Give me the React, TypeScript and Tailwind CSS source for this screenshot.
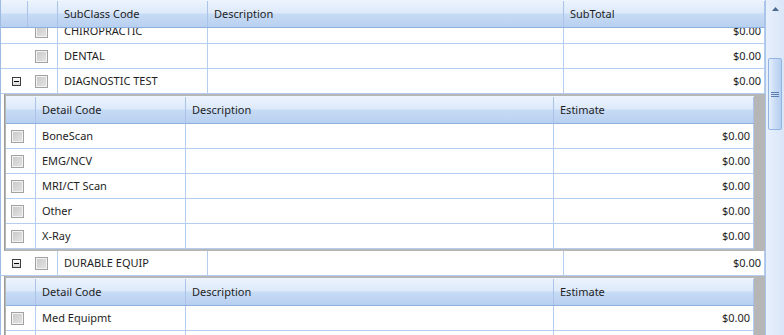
const font = "font-['Noto_Sans',sans-serif] text-[11px] text-[#1e1e1e]";

const masterRows = [
  { code: 'CHIROPRACTIC', total: '$0.00' },
  { code: 'DENTAL', total: '$0.00' },
  {
    code: 'DIAGNOSTIC TEST',
    total: '$0.00',
    details: ['BoneScan', 'EMG/NCV', 'MRI/CT Scan', 'Other', 'X-Ray'],
  },
  { code: 'DURABLE EQUIP', total: '$0.00', details: ['Med Equipmt', ''] },
];

const headerBg =
  'bg-[linear-gradient(to_bottom,#edf4fd_0%,#dde9fa_48%,#c7dbf5_52%,#b8d0f0_100%)]';

function CheckBox() {
  return (
    <span className="flex h-[13px] w-[13px] items-center justify-center border border-[#a2a2a2] bg-[#f2f2f2]">
      <span className="h-[9px] w-[9px] bg-[linear-gradient(135deg,#cbcbcb,#e2e2e2)]" />
    </span>
  );
}

function Expander() {
  return (
    <span className="flex h-[9px] w-[9px] items-center justify-center border border-[#3c3c3c] bg-[linear-gradient(to_bottom,#ffffff,#d8d8d8)]">
      <span className="h-[1px] w-[5px] bg-black" />
    </span>
  );
}

function DetailGrid({ items }: { items: string[] }) {
  return (
    <div className="w-[748px] bg-white">
      <div className={`flex h-[28px] border-b border-[#8fb1df] pt-[1px] ${headerBg}`}>
        <div className="w-[30px] border-r border-[#a9c4e8]" />
        <div className="flex w-[150px] items-center border-r border-[#a9c4e8] pl-[6px]">Detail Code</div>
        <div className="flex w-[368px] items-center border-r border-[#a9c4e8] pl-[6px]">Description</div>
        <div className="flex w-[200px] items-center border-r border-[#a9c4e8] pl-[6px]">Estimate</div>
      </div>
      {items.map((item, i) => (
        <div key={i} className="flex h-[25px] border-b border-[#b5cdee]">
          <div className="flex w-[30px] items-center border-r border-[#b5cdee] pl-[5px]">
            <CheckBox />
          </div>
          <div className="flex w-[150px] items-center border-r border-[#b5cdee] pl-[6px] pt-[1px]">{item}</div>
          <div className="w-[368px] border-r border-[#b5cdee]" />
          <div className="flex w-[200px] items-center justify-end border-r border-[#b5cdee] pr-[3px] pt-[1px]">
            {item ? '$0.00' : ''}
          </div>
        </div>
      ))}
    </div>
  );
}

function ScrollBar() {
  return (
    <div className="flex h-full w-[19px] flex-col border-l border-[#aac5ea] bg-[linear-gradient(to_right,#e8f0fc,#d9e6f8)]">
      <div className="flex h-[17px] items-center justify-center">
        <svg width="7" height="4" viewBox="0 0 7 4">
          <path d="M0 4 L3.5 0 L7 4 Z" fill="#4b6a92" />
        </svg>
      </div>
      <div className="h-[41px]" />
      <div className="mx-[2px] flex h-[72px] items-center justify-center rounded-[2px] border border-[#92b4e2] bg-[linear-gradient(to_right,#e6f0fd,#c9dcf6_50%,#b6cff0)]">
        <div className="flex flex-col gap-[1px]">
          <span className="h-[1px] w-[8px] bg-[#5d7fae]" />
          <span className="h-[1px] w-[8px] bg-[#5d7fae]" />
          <span className="h-[1px] w-[8px] bg-[#5d7fae]" />
        </div>
      </div>
    </div>
  );
}

export default function App() {
  return (
    <div className={`flex h-[335px] w-[784px] overflow-hidden bg-white ${font}`}>
      <div className="flex w-[765px] flex-col border-l border-[#9dbbe3]">
        <div className={`flex h-[28px] shrink-0 border-b border-[#8fb1df] pt-[1px] ${headerBg}`}>
          <div className="w-[27px] border-r border-[#a9c4e8]" />
          <div className="w-[30px] border-r border-[#a9c4e8]" />
          <div className="flex w-[150px] items-center border-r border-[#a9c4e8] pl-[6px]">SubClass Code</div>
          <div className="flex w-[356px] items-center border-r border-[#a9c4e8] pl-[6px]">Description</div>
          <div className="flex w-[201px] items-center border-r border-[#a9c4e8] pl-[6px]">SubTotal</div>
        </div>
        <div className="flex-1 overflow-hidden">
          <div className="-mt-[9px]">
            {masterRows.map((row) => (
              <div key={row.code}>
                <div className="flex h-[25px] border-b border-[#b5cdee]">
                  <div className="flex w-[27px] items-center pl-[11px]">
                    {row.details && <Expander />}
                  </div>
                  <div className="flex w-[30px] items-center border-r border-[#b5cdee] pl-[7px]">
                    <CheckBox />
                  </div>
                  <div className="flex w-[150px] items-center border-r border-[#b5cdee] pl-[6px] pt-[1px]">{row.code}</div>
                  <div className="w-[356px] border-r border-[#b5cdee]" />
                  <div className="flex w-[201px] items-center justify-end border-r border-[#b5cdee] pr-[3px] pt-[1px]">
                    {row.total}
                  </div>
                </div>
                {row.details && (
                  <div className="flex bg-white">
                    <div className="w-[3px]" />
                    <div className="flex-1 border-l border-[#9a9a9a] bg-[#b6b6b6] py-[2px] pl-[1px]">
                      <DetailGrid items={row.details} />
                    </div>
                  </div>
                )}
              </div>
            ))}
          </div>
        </div>
      </div>
      <ScrollBar />
    </div>
  );
}
